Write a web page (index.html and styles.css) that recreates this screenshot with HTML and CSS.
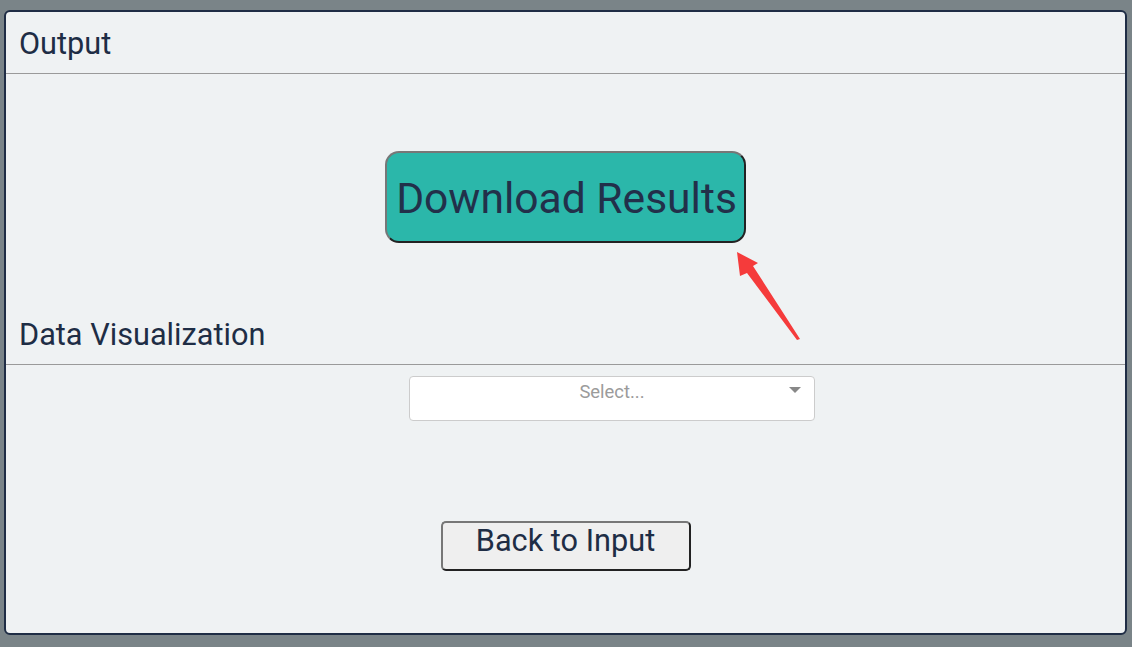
FILE: index.html
```html
<!DOCTYPE html>
<html lang="en">
<head>
    <meta charset="UTF-8">
    <title>Output</title>
    <link rel="stylesheet" href="styles.css">
</head>
<body>
    <div class="card">
        <h2 class="section-title first">Output</h2>
        <hr class="rule">

        <div class="download-row">
            <button class="download-button">Download Results</button>
        </div>

        <h2 class="section-title">Data Visualization</h2>
        <hr class="rule">

        <div class="select-row">
            <div class="select-box">
                <span class="placeholder">Select...</span>
                <span class="caret"></span>
            </div>
        </div>

        <div class="back-row">
            <button class="back-button">Back to Input</button>
        </div>

        <!-- annotation arrow pointing at the download button -->
        <svg class="arrow" width="80" height="100" viewBox="0 0 80 100">
            <polygon points="4,4 25,15 20,18 67,91 64,92 14,25 7,28" fill="#f53b3b"/>
        </svg>
    </div>
</body>
</html>
```

FILE: styles.css
```css
body {
    margin: 0;
    background-color: #7a8488;
    font-family: Roboto, "Liberation Sans", sans-serif;
    padding: 10px 5px 12px 4px;
    height: 647px;
    box-sizing: border-box;
}

.card {
    position: relative;
    height: 100%;
    box-sizing: border-box;
    background-color: #eff2f3;
    border: 2px solid #1f2d45;
    border-radius: 6px;
    display: flex;
    flex-direction: column;
}

.section-title {
    margin: 0;
    padding: 0 13px;
    font-size: 30.7px;
    font-weight: 400;
    line-height: 36px;
    color: #1e2d45;
    margin-top: 74px;
}

.section-title.first {
    margin-top: 14px;
}

.rule {
    border: none;
    border-top: 1px solid #9a9a9a;
    margin: 11px 0 0 0;
}

.download-row {
    display: flex;
    justify-content: center;
    margin-top: 77px;
}

.download-button {
    background-color: #2bb7aa;
    color: #22304a;
    font-family: Roboto, "Liberation Sans", sans-serif;
    font-size: 42.6px;
    height: 92px;
    width: 361px;
    border: 2px solid #222;
    border-color: #777 #222 #222 #777;
    border-radius: 14px;
    padding: 2px 0 0 2px;
}

.select-row {
    display: flex;
    margin-top: 11px;
    padding-left: 403px;
}

.select-box {
    position: relative;
    width: 406px;
    height: 45px;
    box-sizing: border-box;
    background-color: #fff;
    border: 1px solid #cccccc;
    border-radius: 4px;
    display: flex;
    justify-content: center;
    padding-top: 3px;
}

.placeholder {
    color: #9b9b9b;
    font-size: 18.4px;
    line-height: 24px;
}

.caret {
    position: absolute;
    right: 13px;
    top: 10px;
    width: 0;
    height: 0;
    border-left: 6px solid transparent;
    border-right: 6px solid transparent;
    border-top: 6px solid #888;
}

.back-row {
    display: flex;
    justify-content: center;
    margin-top: 100px;
}

.back-button {
    width: 250px;
    height: 50px;
    background-color: #efefef;
    color: #1e2d45;
    font-family: Roboto, "Liberation Sans", sans-serif;
    font-size: 30.7px;
    border: 2px solid #222;
    border-color: #777 #222 #222 #777;
    border-radius: 5px;
    padding: 0 0 11px 0;
}

.arrow {
    position: absolute;
    left: 727px;
    top: 236px;
}
```
